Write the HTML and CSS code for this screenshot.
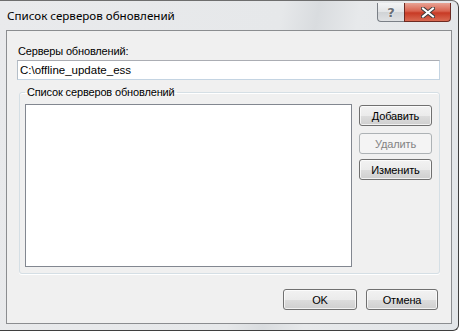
FILE: index.html
```html
<!DOCTYPE html>
<html lang="ru">
<head>
    <meta charset="UTF-8">
    <title>Список серверов обновлений</title>
    <link rel="stylesheet" href="styles.css">
</head>
<body>
    <div class="window">
        <div class="titlebar">
            <span class="title">Список серверов обновлений</span>
            <div class="caption-btns">
                <div class="cbtn help">?</div>
                <div class="cbtn close">
                    <svg width="14" height="11" viewBox="0 0 14 11">
                        <path d="M2 1.5 L12 9.5 M12 1.5 L2 9.5" stroke="#3c3c3c" stroke-width="4" stroke-linecap="square"/>
                        <path d="M2 1.5 L12 9.5 M12 1.5 L2 9.5" stroke="#ffffff" stroke-width="2" stroke-linecap="square"/>
                    </svg>
                </div>
            </div>
        </div>

        <div class="client">
            <div class="field-label">Серверы обновлений:</div>
            <div class="text-input">C:\offline_update_ess</div>

            <fieldset class="group">
                <legend>Список серверов обновлений</legend>
                <div class="group-body">
                    <div class="listbox"></div>
                    <div class="side-btns">
                        <button class="btn btn-add">Добавить</button>
                        <button class="btn btn-del" disabled>Удалить</button>
                        <button class="btn btn-edit">Изменить</button>
                    </div>
                </div>
            </fieldset>

            <div class="footer">
                <button class="btn btn-ok">OK</button>
                <button class="btn btn-cancel">Отмена</button>
            </div>
        </div>
    </div>
</body>
</html>
```

FILE: styles.css
```css
body {
    margin: 0;
    background: #ffffff;
    font-family: "Liberation Sans", Arial, sans-serif;
    font-size: 11px;
    letter-spacing: -0.15px;
    color: #000000;
}

/* рамка окна */
.window {
    box-sizing: border-box;
    width: 459px;
    height: 331px;
    border-top: 1px solid #6e6e6e;
    border-right: 1px solid #3f3f3f;
    border-bottom: 1px solid #3f3f3f;
    border-top-right-radius: 7px;
    border-bottom-right-radius: 6px;
    background: linear-gradient(100deg, #e9eaec 0%, #e6e8ea 55%, #d9dcdf 62%, #e7e9eb 70%, #e2e5e8 100%);
}

.titlebar {
    height: 29px;
    display: flex;
    align-items: flex-start;
    justify-content: space-between;
    padding: 0 7px 0 7px;
}
.title {
    font-family: "Noto Sans", sans-serif;
    font-size: 11.6px;
    letter-spacing: 0;
    line-height: 29px;
    color: #000000;
}
.caption-btns {
    display: flex;
    margin-top: 2px;
}
.cbtn {
    box-sizing: border-box;
    height: 19px;
    display: flex;
    align-items: center;
    justify-content: center;
    border: 1px solid #7a7f86;
    border-top: none;
}
.help {
    width: 27px;
    border-bottom-left-radius: 4px;
    border-right: none;
    background: linear-gradient(#f3f4f5 0%, #e2e4e6 50%, #d0d3d6 52%, #dfe1e3 100%);
    color: #6a6f76;
    font-family: "DejaVu Sans", sans-serif;
    font-size: 13px;
    font-weight: bold;
    text-shadow: 0 0 2px #ffffff;
}
.close {
    width: 47px;
    border-bottom-right-radius: 4px;
    border-color: #6d2a22;
    background: linear-gradient(#e8a394 0%, #d9634f 45%, #c83a25 55%, #d96a52 100%);
}

/* клиентская область */
.client {
    box-sizing: border-box;
    margin-left: 6px;
    width: 446px;
    height: 294px;
    border: 1px solid #8b8d90;
    background: #f0f0f0;
    padding: 12px 11px 0 10px;
}

.field-label {
    line-height: 16px;
    height: 16px;
    padding-left: 1px;
}
.text-input {
    box-sizing: border-box;
    margin-top: 1px;
    height: 20px;
    line-height: 18px;
    padding-left: 2px;
    font-size: 11.5px;
    letter-spacing: 0;
    background: #ffffff;
    border: 1px solid #c4d4e2;
    border-top-color: #abadb3;
    border-left-color: #b4bec8;
}

.group {
    margin: 4px 0 0 2px;
    padding: 0 7px 6px 5px;
    min-width: 0;
    border: 1px solid #d5dfe5;
    border-radius: 3px;
    box-shadow: 0 1px 0 #ffffff, inset 0 1px 0 #ffffff;
}
.group legend {
    padding: 0 2px;
    line-height: 16px;
}
.group-body {
    display: flex;
    gap: 7px;
}
.listbox {
    box-sizing: border-box;
    margin-top: 4px;
    width: 327px;
    height: 163px;
    background: #ffffff;
    border: 1px solid #828790;
}
.side-btns {
    display: flex;
    flex-direction: column;
    padding-top: 5px;
}

/* кнопки в стиле Windows 7 */
.btn {
    box-sizing: border-box;
    height: 21px;
    width: 73px;
    padding: 0;
    font: inherit;
    letter-spacing: inherit;
    color: #000000;
    border: 1px solid #707070;
    border-radius: 3px;
    background: linear-gradient(#f2f2f2 0%, #ebebeb 50%, #dddddd 51%, #cfcfcf 100%);
    box-shadow: inset 0 0 0 1px rgba(255, 255, 255, 0.7);
}
.btn:disabled {
    color: #838383;
    border-color: #adb2b5;
    background: #f4f4f4;
    box-shadow: none;
}
.btn-del {
    margin-top: 7px;
}
.btn-edit {
    margin-top: 5px;
}

.footer {
    display: flex;
    justify-content: flex-end;
    gap: 9px;
    margin: 15px 2px 0 0;
}
.btn-ok {
    width: 74px;
}
.btn-cancel {
    width: 72px;
}
```
